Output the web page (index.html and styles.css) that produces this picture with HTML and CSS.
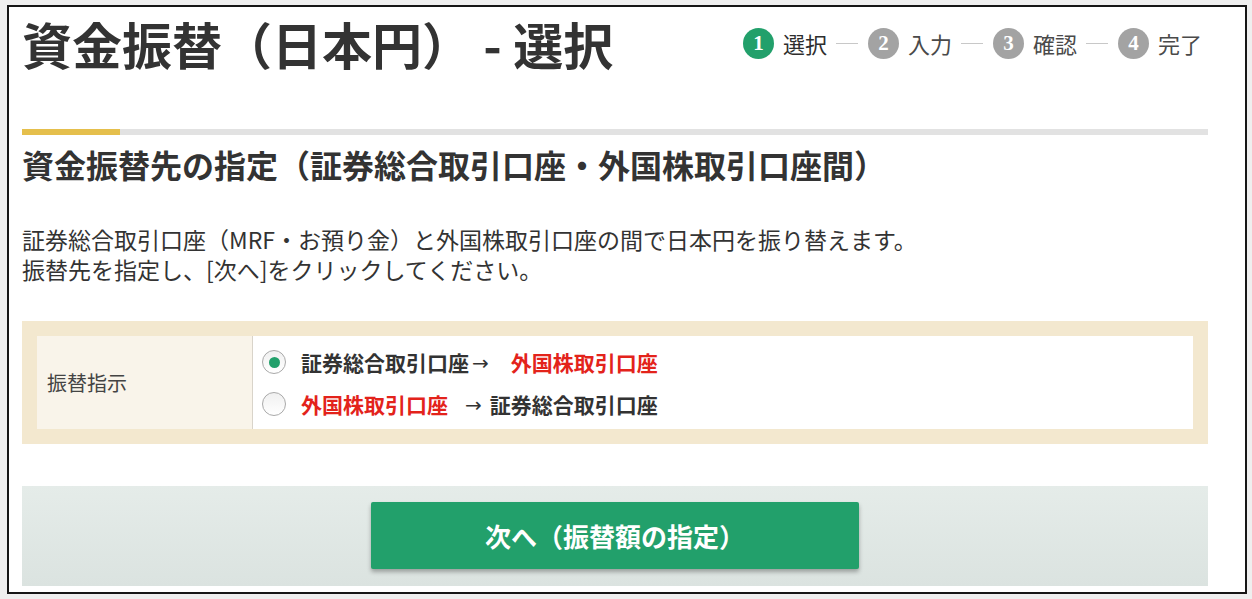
FILE: index.html
```html
<!DOCTYPE html>
<html lang="ja">
<head>
<meta charset="utf-8">
<title>資金振替（日本円） - 選択</title>
<link rel="stylesheet" href="styles.css">
</head>
<body>
<div class="frame">
  <div class="page">
    <header class="header">
      <h1 class="title">資金振替（日本円） - 選択</h1>
      <ol class="steps">
        <li class="step is-current"><span class="step-num">1</span><span class="step-label">選択</span></li>
        <li class="step-line"></li>
        <li class="step"><span class="step-num">2</span><span class="step-label">入力</span></li>
        <li class="step-line"></li>
        <li class="step"><span class="step-num">3</span><span class="step-label">確認</span></li>
        <li class="step-line"></li>
        <li class="step"><span class="step-num">4</span><span class="step-label">完了</span></li>
      </ol>
    </header>

    <div class="rule"><span class="rule-accent"></span></div>

    <h2 class="subtitle">資金振替先の指定（証券総合取引口座・外国株取引口座間）</h2>

    <div class="lead">
      <p class="lead-line">証券総合取引口座（MRF・お預り金）と外国株取引口座の間で日本円を振り替えます。</p>
      <p class="lead-line">振替先を指定し、[次へ]をクリックしてください。</p>
    </div>

    <div class="form-box">
      <div class="form-row">
        <div class="form-label">振替指示</div>
        <div class="form-value">
          <label class="radio-row">
            <span class="radio is-checked"></span>
            <span class="radio-text">証券総合取引口座<span class="arrow arrow-1">→</span><span class="red">外国株取引口座</span></span>
          </label>
          <label class="radio-row">
            <span class="radio"></span>
            <span class="radio-text"><span class="red">外国株取引口座</span><span class="arrow arrow-2">→</span>証券総合取引口座</span>
          </label>
        </div>
      </div>
    </div>

    <div class="action-area">
      <button class="next-btn" type="button">次へ（振替額の指定）</button>
    </div>
  </div>
</div>
</body>
</html>
```

FILE: styles.css
```css
html, body {
  margin: 0;
  padding: 0;
}

body {
  background: #efefef;
  font-family: "Noto Sans CJK JP", "Noto Sans", sans-serif;
  color: #333;
}

.frame {
  box-sizing: border-box;
  width: 1240px;
  height: 589px;
  margin: 5px 0 0 7px;
  border: 2px solid #161616;
  background: #fff;
  overflow: hidden;
}

.page {
  padding: 0 37px 0 13px;
}

.header {
  display: flex;
  align-items: center;
  justify-content: space-between;
  padding-top: 6px;
}

.title {
  margin: 0;
  font-size: 50px;
  line-height: 60px;
  font-weight: 700;
  color: #333;
}

.steps {
  display: flex;
  align-items: center;
  list-style: none;
  margin: 0 6px 0 0;
  padding: 0;
}

.step {
  display: flex;
  align-items: center;
}

.step-num {
  display: flex;
  align-items: center;
  justify-content: center;
  width: 31px;
  height: 31px;
  border-radius: 50%;
  background: #a3a3a3;
  color: #fff;
  font-family: "Liberation Serif", serif;
  font-weight: 700;
  font-size: 21px;
  line-height: 1;
}

.step.is-current .step-num {
  background: #22a06b;
}

.step-label {
  margin-left: 9px;
  font-size: 22px;
  line-height: 30px;
  color: #4a4a4a;
}

.step.is-current .step-label {
  color: #2e2e2e;
}

.step-line {
  width: 22px;
  height: 1px;
  margin: 0 10px 0 9px;
  background: #c8c8c8;
}

.rule {
  display: flex;
  height: 6px;
  margin-top: 56px;
  background: #e2e2e2;
}

.rule-accent {
  width: 98px;
  background: #e5bf4c;
}

.subtitle {
  margin: 7px 0 0;
  font-size: 32px;
  line-height: 44px;
  font-weight: 700;
  color: #333;
}

.lead {
  margin-top: 38px;
}

.lead-line {
  margin: 0;
  font-size: 23px;
  line-height: 30px;
  color: #333;
}

.form-box {
  margin-top: 37px;
  padding: 15px;
  background: #f3e8cf;
}

.form-row {
  display: flex;
  min-height: 93px;
}

.form-label {
  display: flex;
  align-items: center;
  width: 205px;
  padding-left: 10px;
  background: #f9f4ea;
  border-right: 1px solid #d9d4ca;
  font-size: 20px;
  color: #444;
}

.form-value {
  flex: 1;
  display: flex;
  flex-direction: column;
  padding: 5px 0 4px 9px;
  background: #fff;
}

.radio-row {
  display: flex;
  align-items: center;
  height: 42px;
}

.radio {
  box-sizing: border-box;
  flex: none;
  width: 24px;
  height: 24px;
  border-radius: 50%;
  border: 1.5px solid #a9a9a9;
  background: linear-gradient(#f0f0f0, #fff);
  display: flex;
  align-items: center;
  justify-content: center;
  margin-right: 15px;
}

.radio.is-checked::after {
  content: "";
  width: 11px;
  height: 11px;
  border-radius: 50%;
  background: #22a06b;
}

.radio-text {
  font-size: 21px;
  font-weight: 700;
  color: #333;
  white-space: nowrap;
}

.arrow {
  display: inline-block;
  font-family: "DejaVu Sans", sans-serif;
  font-weight: 400;
  font-size: 20px;
  position: relative;
  top: -1px;
}

.arrow-1 {
  margin: 0 22px 0 3px;
}

.arrow-2 {
  margin: 0 8px 0 17px;
}

.red {
  color: #e3231b;
}

.action-area {
  display: flex;
  justify-content: center;
  margin-top: 42px;
  height: 100px;
  padding-top: 16px;
  box-sizing: border-box;
  background: linear-gradient(#e5ece9, #dbe3e0);
}

.next-btn {
  width: 488px;
  height: 67px;
  border: none;
  border-radius: 2px;
  background: #22a06b;
  color: #fff;
  font-family: "Noto Sans CJK JP", "Noto Sans", sans-serif;
  font-size: 26px;
  font-weight: 700;
  box-shadow: 0 3px 4px rgba(0, 0, 0, 0.3);
  cursor: pointer;
}
```
